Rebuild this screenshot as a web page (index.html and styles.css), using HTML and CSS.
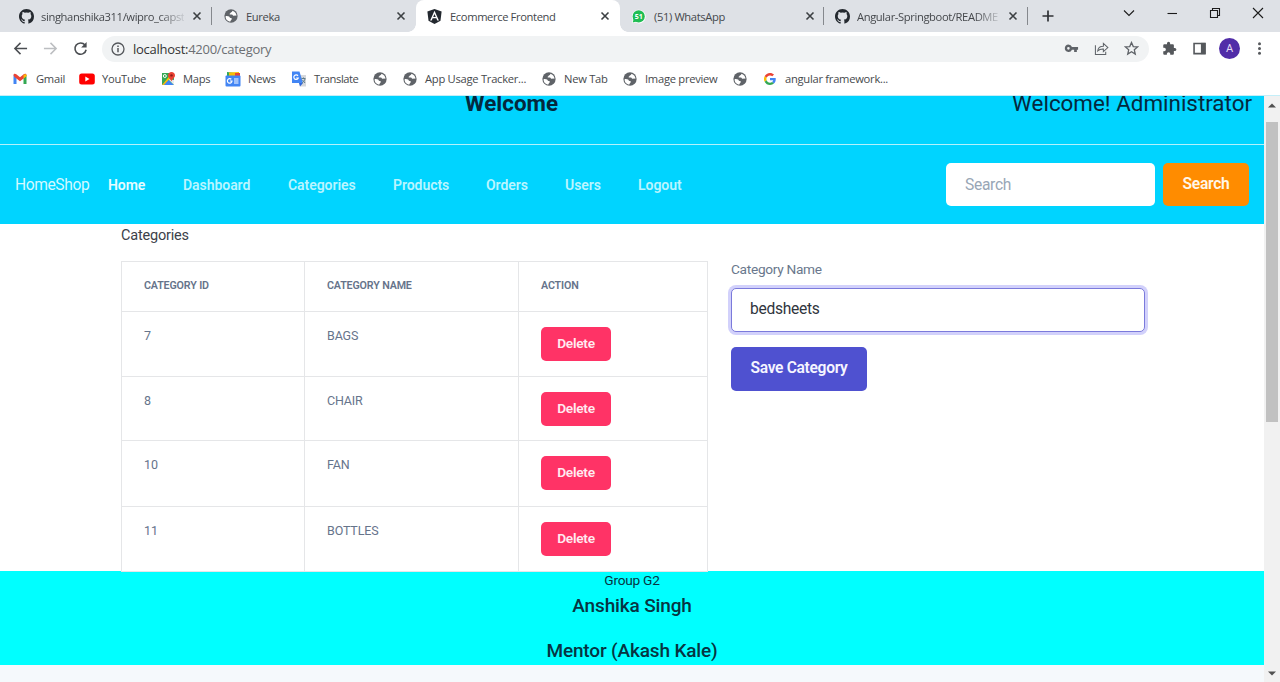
FILE: index.html
```html
<!DOCTYPE html>
<html lang="en">
<head>
<meta charset="utf-8">
<title>Ecommerce Frontend</title>
<link rel="stylesheet" href="styles.css">
</head>
<body>
<svg class="defs" aria-hidden="true">
  <symbol id="github" viewBox="0 0 16 16"><path fill="#24292f" d="M8 0C3.58 0 0 3.58 0 8c0 3.54 2.29 6.53 5.47 7.59.4.07.55-.17.55-.38 0-.19-.01-.82-.01-1.49-2.01.37-2.53-.49-2.69-.94-.09-.23-.48-.94-.82-1.13-.28-.15-.68-.52-.01-.53.63-.01 1.08.58 1.23.82.72 1.21 1.87.87 2.33.66.07-.52.28-.87.51-1.07-1.78-.2-3.64-.89-3.64-3.95 0-.87.31-1.59.82-2.15-.08-.2-.36-1.02.08-2.12 0 0 .67-.21 2.2.82a7.6 7.6 0 0 1 4 0c1.53-1.04 2.2-.82 2.2-.82.44 1.1.16 1.92.08 2.12.51.56.82 1.27.82 2.15 0 3.07-1.87 3.75-3.65 3.95.29.25.54.73.54 1.48 0 1.07-.01 1.93-.01 2.2 0 .21.15.46.55.38A8.01 8.01 0 0 0 16 8c0-4.42-3.58-8-8-8z"/></symbol>
  <symbol id="globe" viewBox="0 0 16 16"><circle cx="8" cy="8" r="7.6" fill="#5f6368"/><path fill="#fff" d="M1.800 8.200c1.500-.5 3-.1 4 .5 1 .7.5 1.500 1.700 1.600 1 .1 1.600.3 1.300 1.300-.3.900-1.300 1-1.500 2.700C4 14 1.700 11.500 1.800 8.200zM9.300 1.900c.4.900-.2 1.500-1 1.700-1 .3-.7 1.200-1.500 1.500-.7.300-.3 1.300.5 1.300 1.200 0 2-.3 2.700.6.6.9 1.500 1 2.300.5.700-.4 1.200-.1 1.900.3.200-2.800-1.700-5.200-4.900-5.900z"/></symbol>
  <symbol id="close" viewBox="0 0 10 10"><path d="M1.500 1.500l7 7M8.500 1.500l-7 7" stroke="#3c4043" stroke-width="1.600" fill="none"/></symbol>
</svg>

<div class="tabstrip">
  <div class="tab divided"><svg class="fav"><use href="#github"/></svg><span class="tab-title fade">singhanshika311/wipro_capst</span><svg class="x"><use href="#close"/></svg></div>
  <div class="tab"><svg class="fav sm"><use href="#globe"/></svg><span class="tab-title">Eureka</span><svg class="x"><use href="#close"/></svg></div>
  <div class="tab active"><svg class="fav" viewBox="0 0 16 16"><path fill="#23282f" d="M8 0l7.600 2.600-1.200 9.800L8 16l-6.400-3.600L.4 2.600z"/><path fill="#fff" fill-rule="evenodd" d="M8 1.900L3.300 12.200h1.800l.9-2.300h4l.9 2.300h1.800zM8 5.200l1.400 3.300H6.600z"/></svg><span class="tab-title">Ecommerce Frontend</span><svg class="x"><use href="#close"/></svg></div>
  <div class="tab divided"><svg class="fav" viewBox="0 0 16 16"><path fill="#fff" d="M.8 15.200l1-4A7.300 7.300 0 1 1 5 14.500z"/><circle cx="8.200" cy="7.900" r="6.500" fill="#1fbd53"/><path fill="#1fbd53" d="M1.800 14.300l1.100-4 3 3z"/><text x="8.200" y="10.700" text-anchor="middle" class="wa">51</text></svg><span class="tab-title">(51) WhatsApp</span><svg class="x"><use href="#close"/></svg></div>
  <div class="tab divided"><svg class="fav"><use href="#github"/></svg><span class="tab-title fade">Angular-Springboot/README</span><svg class="x"><use href="#close"/></svg></div>
  <svg class="plus" viewBox="0 0 12 12"><path d="M6 .5v11M.5 6h11" stroke="#303236" stroke-width="1.700"/></svg>
  <div class="window-controls">
    <svg viewBox="0 0 12 12"><path d="M1 3.500l5 5 5-5"/></svg>
    <svg viewBox="0 0 12 12"><path d="M1.500 6.500h9.500"/></svg>
    <svg viewBox="0 0 12 12"><path d="M1.500 3.500h7v7h-7zM3.500 3.500v-2h7v7h-2"/></svg>
    <svg viewBox="0 0 12 12"><path d="M1 1l10 10M11 1L1 11"/></svg>
  </div>
</div>

<div class="toolbar">
  <svg class="nav-icon" viewBox="0 0 16 16"><path d="M15 8H2.200M8 2L2 8l6 6" stroke="#4a4d51" stroke-width="1.600"/></svg>
  <svg class="nav-icon" viewBox="0 0 16 16"><path d="M1 8h12.800M8 2l6 6-6 6" stroke="#bcbec1" stroke-width="1.600"/></svg>
  <svg class="nav-icon" viewBox="0 0 16 16"><path d="M12.800 4.300A6 6 0 1 0 14 9.300" stroke="#4a4d51" stroke-width="1.700"/><path d="M14.500 1v6H8.700z" fill="#4a4d51"/></svg>
  <div class="omnibox">
    <svg class="info" viewBox="0 0 14 14"><circle cx="7" cy="7" r="6" fill="none" stroke="#55585c" stroke-width="1.300"/><path d="M7 6v4.200M7 3.500v1.500" stroke="#55585c" stroke-width="1.500"/></svg>
    <span class="url"><b>localhost:</b>4200/category</span>
    <div class="omni-icons">
      <svg viewBox="0 0 16 16"><path fill="#5f6368" fill-rule="evenodd" d="M4.700 3.700a4 4 0 0 1 3.800 2.800H15v2.900h-1.300v2.400h-2.900V9.400H8.500a4 4 0 1 1-3.800-5.700zm0 2.700a1.400 1.400 0 1 0 0 2.800 1.400 1.400 0 0 0 0-2.800z"/></svg>
      <svg viewBox="0 0 16 16"><path d="M1.500 4.500v10h11v-3M4 10.500c.3-3.500 2.500-5 6-5v-3l4.800 4.500L10 11.300V8.500c-2.700-.1-4.600.5-6 2z" stroke="#5f6368" stroke-width="1.100" fill="none"/></svg>
      <svg viewBox="0 0 16 16"><path d="M8 1.600l1.900 4.300 4.600.4L11 9.400l1 4.500-4-2.400-4 2.400 1-4.500L1.500 6.300l4.600-.4z" stroke="#5f6368" stroke-width="1.400" fill="none"/></svg>
    </div>
  </div>
  <div class="actions">
    <svg viewBox="0 0 24 24"><path fill="#55585c" d="M20.500 11H19V7c0-1.100-.9-2-2-2h-4V3.500a2.500 2.500 0 0 0-5 0V5H4c-1.100 0-2 .9-2 2v3.800h1.500a2.700 2.700 0 0 1 0 5.400H2V20c0 1.100.9 2 2 2h3.800v-1.500a2.700 2.700 0 0 1 5.400 0V22H17c1.100 0 2-.9 2-2v-4h1.500a2.500 2.500 0 0 0 0-5z"/></svg>
    <svg viewBox="0 0 16 16"><path d="M2.200 2.700h11.600v10.800H2.200z" fill="none" stroke="#55585c" stroke-width="1.700"/><path d="M9.500 2h5v12h-5z" fill="#55585c"/></svg>
    <span class="avatar">A</span>
    <svg viewBox="0 0 16 16"><g fill="#55585c"><circle cx="8" cy="3" r="1.600"/><circle cx="8" cy="8" r="1.600"/><circle cx="8" cy="13" r="1.600"/></g></svg>
  </div>
</div>

<div class="bookmarks">
  <span class="bm w1"><svg viewBox="0 0 14 14"><path fill="#4285f4" d="M.5 3v9h3V6z"/><path fill="#34a853" d="M10.500 6v6h3V3z"/><path fill="#ea4335" d="M.5 3.200C.5 1.500 2.200 1.300 3.300 2.200L7 5.200l3.700-3c1.100-.9 2.800-.7 2.800 1L12.500 5 7 9.300 1.500 5z"/><path fill="#fbbc04" d="M10.500 3v3.600l3-2.300V3.200c0-1-1.500-1.700-3-.2z"/></svg><i>Gmail</i></span>
  <span class="bm w2"><svg viewBox="0 0 16 14"><rect x=".2" y="1.500" width="15.600" height="11" rx="2.500" fill="#f00"/><path fill="#fff" d="M6.300 4.600v4.800L10.500 7z"/></svg><i>YouTube</i></span>
  <span class="bm w3"><svg viewBox="0 0 14 14"><path fill="#34a853" d="M1 1h12v12H1z"/><path fill="#4285f4" d="M6.500 7.500L13 13H1z"/><path fill="#e8eaed" d="M7 7l6 1v5z"/><path fill="#fbbc04" d="M1 13L11 1l1 2L3 13z"/><path fill="#4285f4" d="M3.500 13L8 8.500l4 4.500z"/><circle cx="3.800" cy="4" r="1.500" fill="none" stroke="#fff"/><path fill="#ea4335" d="M10.500 0C8.500 0 7 1.500 7 3.400c0 2.300 2.600 3 3.500 6.100.9-3.100 3.500-3.800 3.500-6.100C14 1.500 12.500 0 10.500 0z"/><circle cx="10.500" cy="3.400" r="1.200" fill="#8c1d18"/></svg><i>Maps</i></span>
  <span class="bm w4"><svg viewBox="0 0 16 16"><path fill="#34a853" d="M2 1l9 1v6H2z"/><path fill="#fbbc04" d="M4 1.500L14 1v7H4z"/><path fill="#ea4335" d="M10 2h5v5h-5z"/><rect x=".5" y="4.500" width="15" height="11" rx="1" fill="#4285f4"/><path d="M6.300 8.200A2.300 2.300 0 1 0 7 10H5M9 8h4.500M9 10h4.500M9 12h4.500" stroke="#fff" stroke-width="1.200" fill="none"/></svg><i>News</i></span>
  <span class="bm w5"><svg viewBox="0 0 16 16"><path fill="#d6d8dc" d="M6 4h9v11.500H9z"/><path fill="#4285f4" d="M1 .5h7.500L12 12H1z"/><path fill="#3367d6" d="M8 12h4l-3 3.500z"/><path d="M7 4.800A2.300 2.300 0 1 0 7.300 7H5.200" stroke="#fff" stroke-width="1.200" fill="none"/><path d="M10.500 7.500h4M12.500 6.500v1M14 8c-.5 2-1.500 3-3 4M11.500 9l2.500 3" stroke="#607d8b" fill="none"/></svg><i>Translate</i></span>
  <span class="bm w6"><svg><use href="#globe"/></svg></span>
  <span class="bm w7"><svg><use href="#globe"/></svg><i>App Usage Tracker...</i></span>
  <span class="bm w8"><svg><use href="#globe"/></svg><i>New Tab</i></span>
  <span class="bm w9"><svg><use href="#globe"/></svg><i>Image preview</i></span>
  <span class="bm w10"><svg><use href="#globe"/></svg></span>
  <span class="bm w11"><svg class="google" viewBox="0 0 48 48"><path fill="#ea4335" d="M24 9.500c3.500 0 6.700 1.200 9.200 3.600l6.900-6.900C35.900 2.400 30.500 0 24 0 14.600 0 6.500 5.400 2.600 13.200l8 6.200C12.400 13.700 17.700 9.500 24 9.500z"/><path fill="#4285f4" d="M47 24.600c0-1.600-.2-3.100-.4-4.600H24v9h12.900c-.6 3-2.300 5.500-4.800 7.200l7.700 6C44.400 38 47 31.900 47 24.600z"/><path fill="#fbbc05" d="M10.500 28.600a14.500 14.500 0 0 1 0-9.200l-8-6.200a24 24 0 0 0 0 21.600z"/><path fill="#34a853" d="M24 48c6.500 0 11.900-2.100 15.900-5.800l-7.700-6c-2.200 1.500-4.900 2.300-8.200 2.300-6.300 0-11.600-4.200-13.500-9.900l-8 6.200C6.500 42.600 14.600 48 24 48z"/></svg><i>angular framework...</i></span>
</div>

<div class="viewport">
  <div class="page">
    <div class="banner"><span class="welcome">Welcome</span><span class="greeting">Welcome! Administrator</span></div>
    <nav class="navbar">
      <a class="brand">HomeShop</a>
      <div class="links"><a class="current">Home</a><a>Dashboard</a><a>Categories</a><a>Products</a><a>Orders</a><a>Users</a><a>Logout</a></div>
      <div class="search"><input type="text" placeholder="Search"><button>Search</button></div>
    </nav>
    <main>
      <p class="heading">Categories</p>
      <div class="columns">
        <table>
          <thead><tr><th>CATEGORY ID</th><th>CATEGORY NAME</th><th>ACTION</th></tr></thead>
          <tbody>
            <tr class="r65"><td>7</td><td>BAGS</td><td><button>Delete</button></td></tr>
            <tr class="r64"><td>8</td><td>CHAIR</td><td><button>Delete</button></td></tr>
            <tr class="r66"><td>10</td><td>FAN</td><td><button>Delete</button></td></tr>
            <tr class="r65"><td>11</td><td>BOTTLES</td><td><button>Delete</button></td></tr>
          </tbody>
        </table>
        <form class="category-form">
          <label>Category Name</label>
          <input type="text" value="bedsheets">
          <button type="button">Save Category</button>
        </form>
      </div>
    </main>
    <footer><p>Group G2</p><h5>Anshika Singh</h5><h5>Mentor (Akash Kale)</h5></footer>
  </div>
  <div class="scrollbar">
    <svg viewBox="0 0 8 5"><path fill="#505050" d="M0 4.500L4 .5l4 4z"/></svg>
    <div class="thumb"></div>
    <svg viewBox="0 0 8 5"><path fill="#505050" d="M0 .5l4 4 4-4z"/></svg>
  </div>
</div>
</body>
</html>
```
FILE: styles.css
```css
* { box-sizing: border-box; }
body { margin: 0; width: 1280px; height: 682px; overflow: hidden; background: #fff; font-family: Roboto, sans-serif; display: flex; flex-direction: column; }
svg { display: block; flex: none; }
p, h5 { margin: 0; }
input, button { font-family: inherit; outline: none; }
.defs { position: absolute; width: 0; height: 0; }

/* Browser tabs */
.tabstrip { height: 32px; background: #dee1e6; display: flex; padding-left: 8px; align-items: stretch; font: 11.200px "Open Sans", sans-serif; color: #45484c; flex: none; }
.tab { width: 204px; height: 32px; display: flex; align-items: center; padding: 0 10px 0 11px; position: relative; }
.tab.active { background: #fff; border-radius: 8px 8px 0 0; }
.tab.active::before, .tab.active::after { content: ""; position: absolute; bottom: 0; width: 8px; height: 8px; }
.tab.active::before { left: -8px; background: radial-gradient(circle at 0 0, transparent 7.500px, #fff 8px); }
.tab.active::after { right: -8px; background: radial-gradient(circle at 100% 0, transparent 7.500px, #fff 8px); }
.tab.divided { background: linear-gradient(#85888d, #85888d) 203px 7px / 1px 18px no-repeat; }
.tab.active + .tab.divided { padding-right: 9px; }
.fav { width: 15px; height: 15px; margin-right: 8px; }
.fav.sm { width: 14px; height: 14px; margin-left: 1px; }
.wa { font: bold 7.500px "Open Sans", sans-serif; fill: #fff; }
.tab-title { flex: 1; min-width: 0; white-space: nowrap; letter-spacing: -0.380px; margin: 0 8px 0 0; }
.fade { margin-left: -1px; -webkit-mask-image: linear-gradient(90deg, #000 118px, transparent 147px); mask-image: linear-gradient(90deg, #000 118px, transparent 147px); }
.x { width: 10px; height: 10px; }
.plus { width: 12px; height: 12px; margin: 10px 0 0 14px; }
.window-controls { display: flex; gap: 31px; margin: 7px 0 0 69px; }
.window-controls svg { width: 12px; height: 12px; fill: none; stroke: #1b1b1b; stroke-width: 1.100; }

/* Address bar */
.toolbar { height: 33px; display: flex; align-items: center; padding-left: 13px; flex: none; }
.nav-icon { width: 15px; height: 15px; margin-right: 15px; fill: none; }
.omnibox { width: 1047px; height: 26px; margin-left: -1px; background: #f1f3f4; border-radius: 13px; display: flex; align-items: center; padding: 0 10px 0 9px; }
.info { width: 14px; height: 14px; }
.url { font: 13px "Open Sans", sans-serif; letter-spacing: -0.270px; color: #6c6f73; margin-left: 8px; }
.url b { font-weight: 400; color: #333; }
.omni-icons { display: flex; gap: 15px; margin-left: auto; }
.omni-icons svg { width: 15px; height: 15px; }
.actions { display: flex; align-items: center; margin-left: 13px; }
.actions > svg { width: 15px; height: 15px; margin-right: 15px; }
.avatar { width: 21px; height: 21px; border-radius: 50%; background: #512da8; color: #e4dcf5; font-size: 11px; line-height: 21px; text-align: center; margin: 0 12px 0 -3px; }
.actions > svg:last-child { margin: 0; }

/* Bookmarks */
.bookmarks { height: 30px; display: flex; align-items: center; padding: 0 0 3px 13px; font: 11.200px "Open Sans", sans-serif; letter-spacing: -0.270px; color: #46494d; flex: none; }
.bm { display: flex; align-items: center; white-space: nowrap; }
.bm i { font-style: normal; margin-left: 8px; }
.bm svg { width: 14px; height: 14px; }
.w1 { width: 66px; } .w2 { width: 82px; } .w3 { width: 64px; } .w4 { width: 66px; } .w5 { width: 82px; }
.w6 { width: 30px; } .w7 { width: 139px; } .w8 { width: 81px; } .w9 { width: 110px; } .w10 { width: 30px; } .w11 { width: 130px; }
.w1 i { margin-left: 9px; }
.w2 svg { width: 16px; } .w2 i { margin-left: 7px; }
.w4 svg, .w5 svg { width: 16px; height: 16px; }
.w4 i, .w5 i { margin-left: 7px; }
.w5 i { letter-spacing: -0.450px; }
.bm .google { width: 12px; height: 12px; margin: 0 1px; }

/* Page */
.viewport { flex: 1; display: flex; border-top: 1px solid #c4eef8; }
.page { width: 1264px; height: 586px; overflow: hidden; background: #f5f9fc; }
.banner { height: 49px; background: #00d4ff; border-bottom: 1px solid #b3f1fc; display: flex; justify-content: space-between; color: #04283d; font-size: 22.400px; line-height: 26px; padding: 0 12px 0 465px; }
.banner span { margin-top: -6px; }
.welcome { font-weight: 700; }
.navbar { height: 79px; background: #00d4ff; display: flex; align-items: center; padding: 0 15px; }
.brand { width: 93px; font-size: 15.600px; letter-spacing: -0.400px; color: #d4f9ff; }
.links { display: grid; grid-template-columns: 75px 105px 105px 93px 79px 73px 60px; font-size: 14px; font-weight: 600; letter-spacing: -0.050px; color: #b9f5ff; }
.links .current { color: #e6fcff; }
.search { display: flex; margin-left: auto; gap: 8px; }
.search input { width: 209px; height: 43px; border: 0; border-radius: 5px; padding: 0 19px; font-size: 15.600px; letter-spacing: -0.300px; color: #333; }
.search input::placeholder { color: #98a6b6; }
.search button { width: 86px; height: 43px; border: 0; border-radius: 5px; background: #ff8c00; color: #fff6e8; font-size: 15.600px; letter-spacing: -0.300px; font-weight: 600; padding: 0 0 1px; }
main { height: 347px; background: #fff; padding: 0 119px 0 121px; }
.heading { font-size: 14.500px; letter-spacing: -0.200px; line-height: 24px; height: 37px; color: #3c4149; }
.columns { display: flex; align-items: flex-start; justify-content: space-between; }
table { width: 587px; table-layout: fixed; border-collapse: collapse; color: #66748b; }
th, td { border: 1px solid #e5e6e8; padding: 0 0 0 22px; text-align: left; font-size: 12.500px; letter-spacing: -0.150px; }
th:first-child { width: 183px; } th:nth-child(2) { width: 214px; }
th { height: 50px; font-size: 10.700px; letter-spacing: -0.150px; font-weight: 600; color: #65738a; padding-bottom: 2px; }
td { vertical-align: top; line-height: 17px; padding-top: 15px; }
.r64 { height: 64px; } .r65 { height: 65px; } .r66 { height: 66px; }
td button { display: block; width: 70px; height: 34px; border: 0; border-radius: 5px; background: #ff3366; color: #ffeaf0; font-size: 13.700px; letter-spacing: -0.250px; font-weight: 600; padding: 0 0 2px; }
.category-form { width: 414px; display: flex; flex-direction: column; align-items: flex-start; }
label { font-size: 13.700px; letter-spacing: -0.300px; line-height: 17px; color: #69778c; margin-bottom: 10px; }
.category-form input { width: 414px; height: 44px; border: 1px solid #7b7adb; border-radius: 5px; box-shadow: 0 0 0 3px #d2d1fb; padding: 0 18px 2px; font-size: 15.600px; letter-spacing: -0.300px; color: #30353d; }
.category-form button { width: 136px; height: 44px; margin-top: 15px; border: 0; border-radius: 5px; background: #4f51d0; color: #f5f5ff; font-size: 15.600px; letter-spacing: -0.320px; font-weight: 600; padding: 0 0 2px; }
footer { height: 94px; background: #00ffff; text-align: center; color: #073442; }
footer p { font-size: 13.700px; letter-spacing: -0.250px; line-height: 18px; }
footer h5 { font-size: 19px; letter-spacing: -0.150px; line-height: 22px; font-weight: 500; margin-top: 6px; }
footer h5 + h5 { margin-top: 23px; }

.scrollbar { width: 16px; background: #f1f1f1; display: flex; flex-direction: column; align-items: center; padding: 7px 0 6px; }
.scrollbar svg { width: 8px; height: 5px; }
.scrollbar svg:last-child { margin-top: auto; }
.thumb { width: 12px; height: 300px; background: #c1c1c1; margin-top: 14px; }
```
